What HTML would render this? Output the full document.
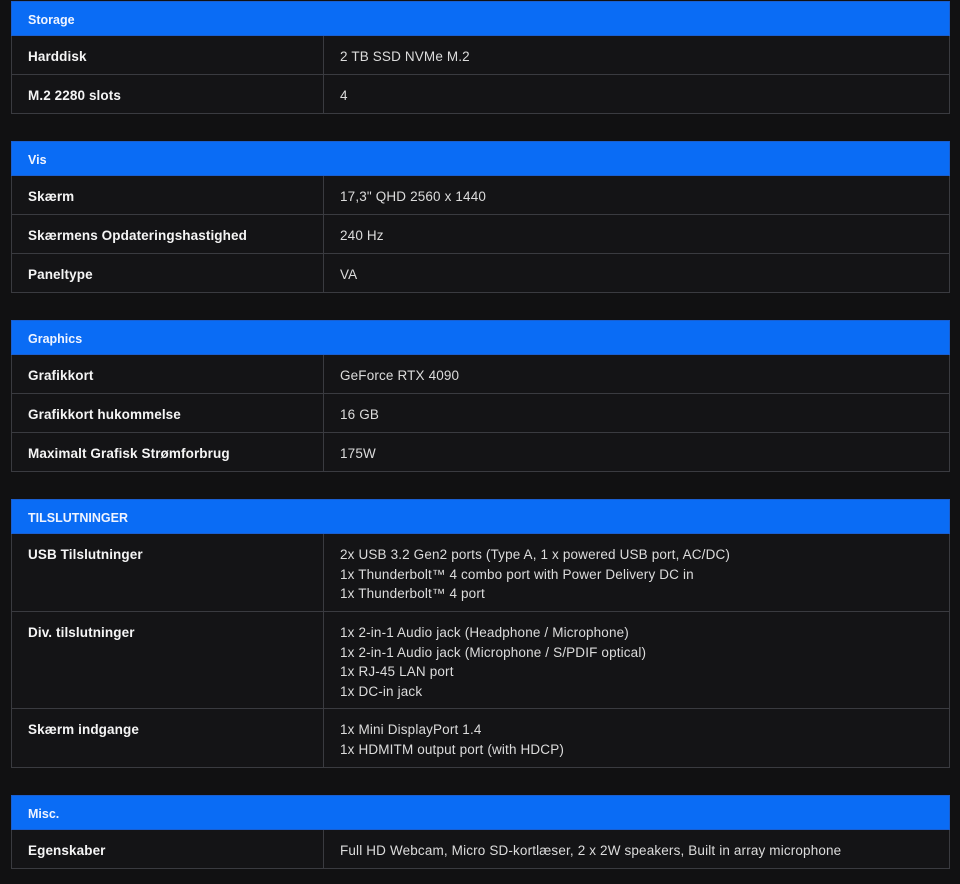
<!DOCTYPE html>
<html><head><meta charset="utf-8"><style>
body{margin:0;background:#111112;width:960px;height:884px;overflow:hidden;font-family:"Liberation Sans",sans-serif;color:#e8e8e8;font-size:13.5px}
.sec{position:absolute;left:11px;width:939px}
.h{height:35px;background:#0a6cf5;color:#f0f4ff;font-weight:bold;font-size:12.5px;line-height:36px;padding-left:16px;box-sizing:border-box;border:1px solid #1a5fd0}
.r{display:flex;border:1px solid #3a3b40;border-top:none;box-sizing:border-box;background:#141416}
.l{width:312px;flex:none;border-right:1px solid #3a3b40;padding:11px 0 0 16px;box-sizing:border-box;font-weight:bold;color:#f5f5f5;line-height:19.5px;letter-spacing:0.1px}
.v{padding:11px 0 0 16px;line-height:19.5px;color:#dcdcdc;letter-spacing:0.15px;white-space:nowrap}
</style></head><body>
<div class="sec" style="top:1px"><div class="h">Storage</div>
<div class="r" style="height:39px"><div class="l">Harddisk</div><div class="v">2 TB SSD NVMe M.2</div></div>
<div class="r" style="height:39px"><div class="l">M.2 2280 slots</div><div class="v">4</div></div></div>
<div class="sec" style="top:141px"><div class="h">Vis</div>
<div class="r" style="height:39px"><div class="l">Skærm</div><div class="v">17,3" QHD 2560 x 1440</div></div>
<div class="r" style="height:39px"><div class="l">Skærmens Opdateringshastighed</div><div class="v">240 Hz</div></div>
<div class="r" style="height:39px"><div class="l">Paneltype</div><div class="v">VA</div></div></div>
<div class="sec" style="top:320px"><div class="h">Graphics</div>
<div class="r" style="height:39px"><div class="l">Grafikkort</div><div class="v">GeForce RTX 4090</div></div>
<div class="r" style="height:39px"><div class="l">Grafikkort hukommelse</div><div class="v">16 GB</div></div>
<div class="r" style="height:39px"><div class="l">Maximalt Grafisk Strømforbrug</div><div class="v">175W</div></div></div>
<div class="sec" style="top:499px"><div class="h">TILSLUTNINGER</div>
<div class="r" style="height:78px"><div class="l">USB Tilslutninger</div><div class="v">2x USB 3.2 Gen2 ports (Type A, 1 x powered USB port, AC/DC)<br>1x Thunderbolt™ 4 combo port with Power Delivery DC in<br>1x Thunderbolt™ 4 port</div></div>
<div class="r" style="height:97px"><div class="l">Div. tilslutninger</div><div class="v">1x 2-in-1 Audio jack (Headphone / Microphone)<br>1x 2-in-1 Audio jack (Microphone / S/PDIF optical)<br>1x RJ-45 LAN port<br>1x DC-in jack</div></div>
<div class="r" style="height:59px"><div class="l">Skærm indgange</div><div class="v">1x Mini DisplayPort 1.4<br>1x HDMITM output port (with HDCP)</div></div></div>
<div class="sec" style="top:795px"><div class="h">Misc.</div>
<div class="r" style="height:39px"><div class="l">Egenskaber</div><div class="v">Full HD Webcam, Micro SD-kortlæser, 2 x 2W speakers, Built in array microphone</div></div></div>
</body></html>
